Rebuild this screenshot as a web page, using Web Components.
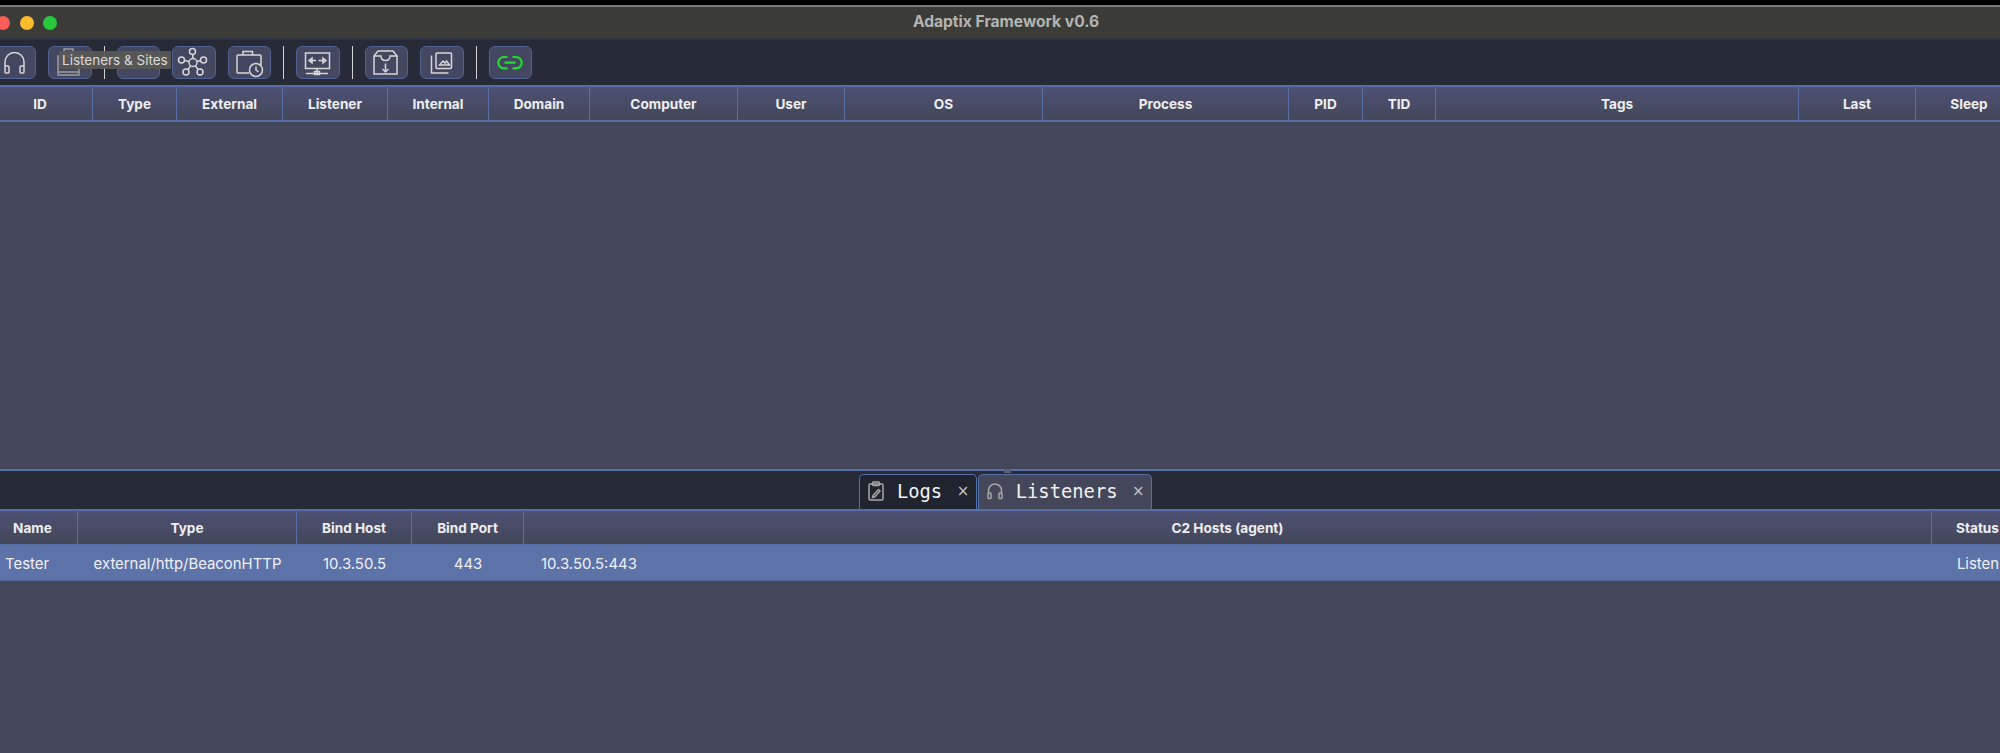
<!DOCTYPE html>
<html>
<head>
<meta charset="utf-8">
<title>Adaptix Framework</title>
<style>
  html, body { margin: 0; height: 100%; background: #000; overflow: hidden; }
</style>
</head>
<body>
<app-window>
  <title-bar slot="title">Adaptix Framework v0.6</title-bar>
  <tool-bar slot="tools">
    <tool-button><svg viewBox="0 0 44 34"><path d="M12 20v-4a9.500 9.500 0 0 1 19 0v4"/><rect x="12" y="20" width="4" height="7" rx="1"/><rect x="27" y="20" width="4" height="7" rx="1"/></svg></tool-button>
    <tool-button><svg class="dim" viewBox="0 0 44 34"><rect x="16" y="3" width="9" height="8"/><rect x="10" y="10" width="21" height="19"/><path d="M10 26h21"/></svg></tool-button>
    <tool-sep></tool-sep>
    <tool-button></tool-button>
    <tool-button><svg viewBox="0 0 44 34"><circle cx="21" cy="16.500" r="4"/><circle cx="20.500" cy="5.500" r="3"/><circle cx="9.500" cy="14" r="3"/><circle cx="31.500" cy="14" r="3"/><circle cx="14" cy="26" r="3"/><circle cx="28" cy="26" r="3"/><path d="M20.800 12.500V8.500M17 15.500l-4.600-1M25 15.500l3.600-1M18.700 19.800l-3 4M23.300 19.800l3 4"/></svg></tool-button>
    <tool-button><svg viewBox="0 0 44 34"><path d="M22 27H11a1 1 0 0 1-1-1V10a1 1 0 0 1 1-1h22a1 1 0 0 1 1 1v9"/><path d="M16 9V5.500h9.500V9"/><circle class="fill" cx="29" cy="24" r="6.500"/><path class="hand" d="M29 20.500V24l2.500 2"/></svg></tool-button>
    <tool-sep></tool-sep>
    <tool-button><svg viewBox="0 0 44 34"><rect x="9.500" y="7" width="24" height="15.500"/><path d="M14 14.500h6M28.500 14.500h-6"/><path class="fill" d="M13 14.500l3-2.500v5zM30 14.500l-3-2.500v5z"/><path d="M10 27.500h22M21 22.500v5"/><rect class="fill" x="18.500" y="25.500" width="5" height="3"/></svg></tool-button>
    <tool-sep></tool-sep>
    <tool-button><svg viewBox="0 0 44 34"><path d="M14 5h15l4 5v18H10V10zM10 10h7c0 3 2 4.500 4.500 4.500s4.500-1.500 4.500-4.500h7"/><path d="M21.500 17.500V26M18.500 23l3 3 3-3"/></svg></tool-button>
    <tool-button><svg viewBox="0 0 44 34"><rect x="16" y="7" width="15.500" height="15.500" rx="1"/><path d="M11.500 9.500V27h17"/><path class="fill" d="M19.500 19l3.500-4 2 2 1.500-2 3 4z"/></svg></tool-button>
    <tool-sep></tool-sep>
    <tool-button><svg class="green" viewBox="0 0 44 34"><path d="M19.500 11h-3.500a5.700 5.700 0 0 0 0 11.400h3.500M24.500 11h3.500a5.700 5.700 0 0 1 0 11.400h-3.500M16.500 16.700h11"/></svg></tool-button>
    <tool-tip>Listeners &amp; Sites</tool-tip>
  </tool-bar>
  <data-table slot="top" widths="105,84,106,105,101,101,148,107,198,246,74,73,363,117,107"
    headers="ID|Type|External|Listener|Internal|Domain|Computer|User|OS|Process|PID|TID|Tags|Last|Sleep"></data-table>
  <tab-strip slot="tabs">
    <tab-item selected label="Logs"><svg viewBox="0 0 18 20"><rect x="2" y="3" width="14" height="16" rx="1.500"/><rect x="5.500" y="1" width="7" height="3.500" rx="1"/><path d="M6 14.500l5.500-6 1.500 1.500-5.500 6-2 .5z"/></svg></tab-item>
    <tab-item label="Listeners"><svg viewBox="0 0 18 20"><path d="M2.500 13v-3.500a6.500 6.500 0 0 1 13 0V13"/><rect x="2" y="12" width="3" height="5.500" rx=".8"/><rect x="13" y="12" width="3" height="5.500" rx=".8"/></svg></tab-item>
  </tab-strip>
  <data-table slot="bottom" widths="90,219,115,112,1408,92" align="l,c,c,c,l,c"
    headers="Name|Type|Bind Host|Bind Port|C2 Hosts (agent)|Status"
    row="Tester|external/http/BeaconHTTP|10.3.50.5|443|10.3.50.5:443|Listen"></data-table>
</app-window>

<script>
const ink = '#d6d6d8';

class AppWindow extends HTMLElement {
  constructor() {
    super();
    const shadow = this.attachShadow({ mode: 'open' });
    shadow.innerHTML = `
      <style>
        :host { display: flex; flex-direction: column; height: 753px; width: 2000px; overflow: hidden; background: #434759; }
        .edge { height: 5px; background: #000; flex: none; }
        .top { height: 384px; flex: none; display: flex; }
        .bottom { flex: 1; display: flex; }
        ::slotted([slot="top"]), ::slotted([slot="bottom"]) { flex: 1; min-width: 0; }
      </style>
      <div class="edge"></div>
      <slot name="title"></slot>
      <slot name="tools"></slot>
      <div class="top"><slot name="top"></slot></div>
      <slot name="tabs"></slot>
      <div class="bottom"><slot name="bottom"></slot></div>`;
  }
}

class TitleBar extends HTMLElement {
  constructor() {
    super();
    this.attachShadow({ mode: 'open' }).innerHTML = `
      <style>
        :host { display: flex; flex: none; box-sizing: border-box; height: 35px; align-items: center; justify-content: center; padding: 0 0 3px 12px; position: relative;
          background: #3b3c38; border-top: 2px solid #7b7b78; border-bottom: 2px solid #2c3144;
          color: #b3b4b2; font: 700 15.600px Inter, "Liberation Sans", sans-serif; }
        .lights { position: absolute; left: -4px; top: 9px; display: flex; gap: 9.500px; }
        .lights i { width: 14px; height: 14px; border-radius: 50%; }
      </style>
      <div class="lights"><i style="background:#fc5f57"></i><i style="background:#fdbb2e"></i><i style="background:#28c83f"></i></div>
      <slot></slot>`;
  }
}

class ToolBar extends HTMLElement {
  constructor() {
    super();
    this.attachShadow({ mode: 'open' }).innerHTML = `
      <style>
        :host { display: flex; flex: none; box-sizing: border-box; height: 45px; padding: 6px 0 6px 0; margin-left: -7px; gap: 12px; position: relative; background: #272b37; }
      </style>
      <slot></slot>`;
  }
}

class ToolButton extends HTMLElement {
  constructor() {
    super();
    this.attachShadow({ mode: 'open' }).innerHTML = `
      <style>
        :host { display: block; box-sizing: border-box; width: 43.300px; height: 33px; background: #434760; border: 1.500px solid #4f6290; border-radius: 6px; position: relative; }
        ::slotted(svg) { position: absolute; left: -1.500px; top: -1.500px; width: 44px; height: 34px; fill: none; stroke: ${ink}; stroke-width: 1.500; }
        ::slotted(svg.green) { stroke: #1fe02a; stroke-width: 2.200; }
        ::slotted(svg.dim) { stroke: #9c9ca4; }
      </style>
      <slot></slot>`;
  }
}

class ToolSep extends HTMLElement {
  constructor() {
    super();
    this.attachShadow({ mode: 'open' }).innerHTML = `
      <style>:host { display: block; width: 1.400px; height: 33px; background: #d2d2d4; }</style>`;
  }
}

class ToolTip extends HTMLElement {
  constructor() {
    super();
    this.attachShadow({ mode: 'open' }).innerHTML = `
      <style>
        :host { position: absolute; left: 66px; top: 11px; box-sizing: border-box; height: 18px; padding: 0 3px; display: flex; align-items: center;
          background: rgba(88, 88, 86, .95); color: #dadad8; white-space: nowrap; font: 400 13.500px Inter, "Liberation Sans", sans-serif; }
      </style>
      <slot></slot>`;
  }
}

class DataTable extends HTMLElement {
  constructor() {
    super();
    this.attachShadow({ mode: 'open' });
  }

  connectedCallback() {
    const widths = this.getAttribute('widths').split(',');
    const headers = this.getAttribute('headers').split('|');
    const align = (this.getAttribute('align') || '').split(',');
    const row = this.getAttribute('row');
    const grid = widths.map(w => w + 'px').join(' ');

    var head = headers.map(text => `<div class="th">${text}</div>`).join('');
    var body = row ? row.split('|').map((text, i) =>
      `<div class="td ${align[i] == 'l' ? 'left' : ''}">${text}</div>`).join('') : '';

    this.shadowRoot.innerHTML = `
      <style>
        :host { display: block; overflow: hidden; background: #434759; color: #fff; }
        .row { display: grid; grid-template-columns: ${grid}; margin-left: -12px; }
        .head { height: 37px; box-sizing: border-box; border-top: 2px solid #5670a6; border-bottom: 2px solid #5670a6;
          background: linear-gradient(#4d5173, #434759); }
        .th { display: flex; align-items: center; justify-content: center; white-space: nowrap; border-right: 1.500px solid #5670a6;
          color: #eeeef0; font: 700 13.600px Inter, "Liberation Sans", sans-serif; }
        .body { height: 35px; background: #5c72a8; border-bottom: 1px solid #5368a0; box-sizing: border-box; }
        .td { display: flex; align-items: center; justify-content: center; white-space: nowrap; overflow: visible; padding-top: 1px;
          color: #f0f0f4; font: 400 14.900px Inter, "Liberation Sans", sans-serif; }
        .td.left { justify-content: flex-start; padding-left: 17px; }
      </style>
      <div class="row head">${head}</div>
      ${body ? `<div class="row body">${body}</div>` : ''}`;
  }
}

class TabStrip extends HTMLElement {
  constructor() {
    super();
    this.attachShadow({ mode: 'open' }).innerHTML = `
      <style>
        :host { display: flex; flex: none; box-sizing: border-box; height: 40px; justify-content: center; align-items: flex-end; padding-left: 12px; position: relative;
          background: #272b37; border-top: 2px solid #5670a6; }
        .grip { position: absolute; left: 1004px; top: -2px; width: 7px; height: 4px; background: #5d6070; }
      </style>
      <div class="grip"></div>
      <slot></slot>`;
  }
}

class TabItem extends HTMLElement {
  constructor() {
    super();
    var label = this.getAttribute('label');
    this.attachShadow({ mode: 'open' }).innerHTML = `
      <style>
        :host { display: flex; align-items: center; box-sizing: border-box; height: 35px; padding: 0 6.500px 2px 7px; margin-right: 1px;
          background: #434759; border: 1.500px solid #5670a6; border-bottom: 0; border-radius: 5px 5px 0 0; color: #f2f2f2;
          font: 400 18.800px "DejaVu Sans Mono", "Liberation Mono", monospace; }
        :host([selected]) { background: #20242f; }
        ::slotted(svg) { width: 18px; height: 20px; fill: none; stroke: #a6a6a8; stroke-width: 1.500; flex: none; }
        .label { margin-left: 12px; }
        .close { margin-left: 14.500px; color: #c4c4c6; font: 400 15px "DejaVu Sans", sans-serif; }
      </style>
      <slot></slot><span class="label">${label}</span><span class="close">×</span>`;
  }
}

customElements.define('app-window', AppWindow);
customElements.define('title-bar', TitleBar);
customElements.define('tool-bar', ToolBar);
customElements.define('tool-button', ToolButton);
customElements.define('tool-sep', ToolSep);
customElements.define('tool-tip', ToolTip);
customElements.define('data-table', DataTable);
customElements.define('tab-strip', TabStrip);
customElements.define('tab-item', TabItem);
</script>
</body>
</html>
